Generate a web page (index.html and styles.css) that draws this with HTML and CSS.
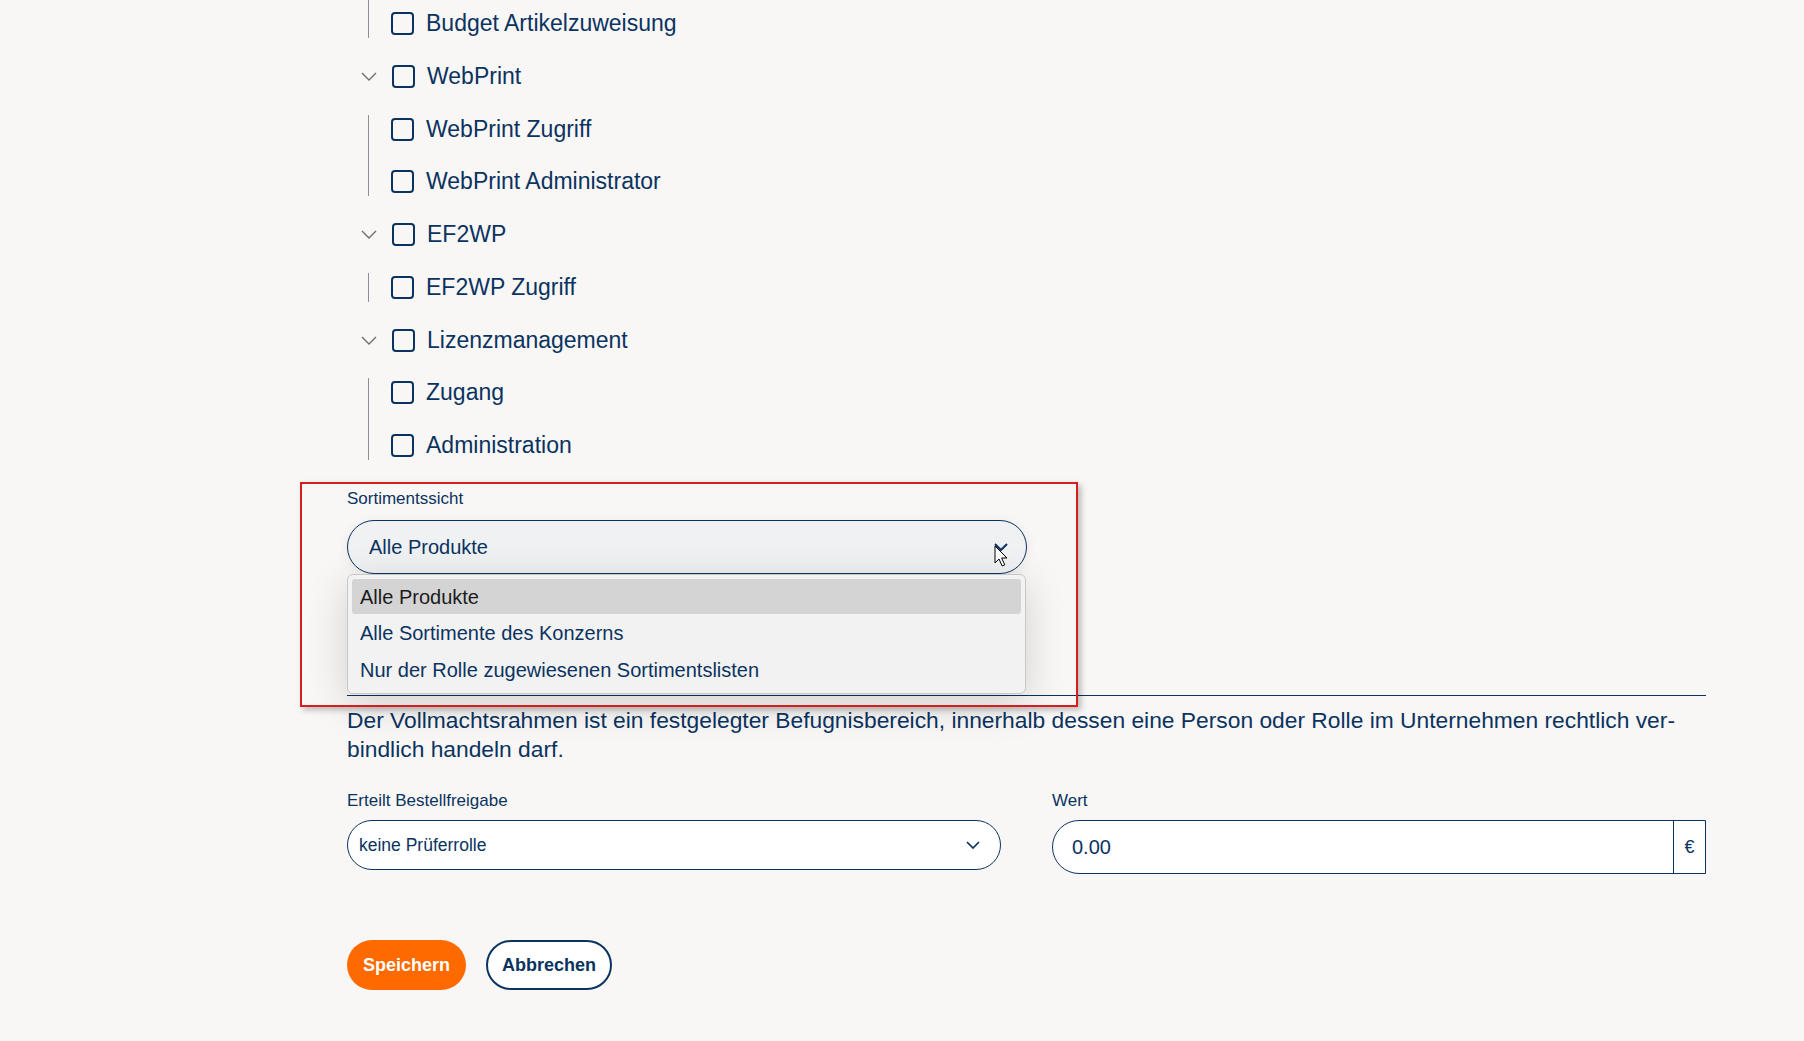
FILE: index.html
```html
<!DOCTYPE html>
<html lang="de">
<head>
    <meta charset="UTF-8">
    <meta name="viewport" content="width=device-width, initial-scale=1.0">
    <title>Rolle bearbeiten</title>
    <link rel="stylesheet" href="styles.css">
</head>
<body>
    <div class="page">

        <!-- permission tree, scrolled: the parent of the first group is above -->
        <div class="tree">
            <div class="children is-continued">
                <div class="node"><span class="box"></span>Budget Artikelzuweisung</div>
            </div>

            <div class="node parent">
                <svg class="toggle" viewBox="0 0 16 9"><path d="M1 1l7 7 7-7"/></svg>
                <span class="box"></span>WebPrint
            </div>
            <div class="children">
                <div class="node"><span class="box"></span>WebPrint Zugriff</div>
                <div class="node"><span class="box"></span>WebPrint Administrator</div>
            </div>

            <div class="node parent">
                <svg class="toggle" viewBox="0 0 16 9"><path d="M1 1l7 7 7-7"/></svg>
                <span class="box"></span>EF2WP
            </div>
            <div class="children">
                <div class="node"><span class="box"></span>EF2WP Zugriff</div>
            </div>

            <div class="node parent">
                <svg class="toggle" viewBox="0 0 16 9"><path d="M1 1l7 7 7-7"/></svg>
                <span class="box"></span>Lizenzmanagement
            </div>
            <div class="children">
                <div class="node"><span class="box"></span>Zugang</div>
                <div class="node"><span class="box"></span>Administration</div>
            </div>
        </div>

        <!-- Sortimentssicht, shown opened -->
        <div class="assortment">
            <div class="field">
                <span class="field-label">Sortimentssicht</span>
                <div class="select is-open">
                    <span class="select-value">Alle Produkte</span>
                    <svg class="select-arrow" viewBox="0 0 14 8"><path d="M1 1l6 6 6-6"/></svg>
                    <svg class="cursor" viewBox="0 0 14 22"><path d="M1 1v17l4-4 3.2 7 2.6-1.2-3.2-6.8H13z"/></svg>
                    <ul class="options">
                        <li class="option is-active">Alle Produkte</li>
                        <li class="option">Alle Sortimente des Konzerns</li>
                        <li class="option">Nur der Rolle zugewiesenen Sortimentslisten</li>
                    </ul>
                </div>
            </div>
            <div class="highlight"></div>
        </div>

        <hr class="divider">

        <p class="note">Der Vollmachtsrahmen ist ein festgelegter Befugnisbereich, innerhalb dessen eine Person oder Rolle im Unternehmen rechtlich ver-<br>bindlich handeln darf.</p>

        <div class="approval">
            <div class="field">
                <span class="field-label">Erteilt Bestellfreigabe</span>
                <div class="select small">
                    <span class="select-value">keine Prüferrolle</span>
                    <svg class="select-arrow" viewBox="0 0 14 8"><path d="M1 1l6 6 6-6"/></svg>
                </div>
            </div>
            <div class="field">
                <span class="field-label">Wert</span>
                <div class="amount">
                    <span class="amount-value">0.00</span>
                    <span class="amount-unit">€</span>
                </div>
            </div>
        </div>

        <div class="actions">
            <button class="btn btn-primary">Speichern</button>
            <button class="btn btn-secondary">Abbrechen</button>
        </div>
    </div>
</body>
</html>
```

FILE: styles.css
```css
body {
    margin: 0;
    background-color: #f8f7f6;
    font-family: "Liberation Sans", Arial, sans-serif;
    color: #0b3360;
}
.page {
    margin-left: 347px;
    width: 1359px;
    padding-bottom: 50px;
}

/* tree */
.tree {
    display: flex;
    flex-direction: column;
    gap: 23.75px;
    padding-left: 14px;
}
.node {
    display: flex;
    align-items: center;
    height: 29px;
    font-size: 23px;
}
.box {
    width: 19px;
    height: 19px;
    border: 2px solid #0b3360;
    border-radius: 4px;
    margin-right: 12px;
    flex-shrink: 0;
}
.toggle {
    width: 16px;
    height: 9px;
    margin-right: 15px;
    fill: none;
    stroke: #6b6e72;
    stroke-width: 1.4;
}
.children {
    display: flex;
    flex-direction: column;
    gap: 23.75px;
    margin-left: 7px;
    padding-left: 22px;
    border-left: 1px solid #8c9096;
}
.children.is-continued {
    padding-top: 9px;
}

/* fields */
.field {
    display: flex;
    flex-direction: column;
    gap: 11px;
}
.field-label {
    font-size: 17px;
    line-height: 20px;
}
.select {
    position: relative;
    display: flex;
    align-items: center;
    justify-content: space-between;
    height: 54px;
    box-sizing: border-box;
    padding: 0 18px 0 21px;
    border: 1px solid #0b3360;
    border-radius: 27px;
    background-color: #fff;
    font-size: 20px;
}
.select.is-open {
    background-color: #f0f1f3;
    box-shadow: 0 2px 12px rgba(0, 0, 0, 0.07);
}
.select.small {
    height: 50px;
    padding: 0 20px 0 11px;
    border-radius: 25px;
    font-size: 17.5px;
}
.select-arrow {
    width: 14px;
    height: 8px;
    fill: none;
    stroke: #0b3360;
    stroke-width: 2;
}
.select.small .select-arrow {
    stroke-width: 1.7;
}
.cursor {
    position: absolute;
    left: 646px;
    top: 24px;
    width: 14px;
    height: 22px;
    fill: #fff;
    stroke: #000;
    stroke-width: 1;
}
.options {
    position: absolute;
    top: calc(100% + 1px);
    left: -1px;
    right: 0;
    margin: 0;
    padding: 4px;
    list-style: none;
    background-color: #f2f2f2;
    border: 1px solid #c8c8c8;
    border-radius: 6px;
    box-shadow: 0 10px 40px rgba(0, 0, 0, 0.16);
    z-index: 2;
}
.option {
    height: 37px;
    line-height: 36px;
    padding-left: 8px;
    border-radius: 3px;
    font-size: 20px;
}
.option.is-active {
    height: 35px;
    margin-bottom: 1px;
    background-color: #d4d4d4;
    color: #1c1c1c;
}

.assortment {
    position: relative;
    width: 680px;
    margin-top: 29px;
    margin-bottom: 121px;
}
/* red annotation frame around the opened select */
.highlight {
    position: absolute;
    top: -7px;
    left: -47px;
    width: 774px;
    height: 221px;
    border: 2px solid #d71d1d;
    box-shadow: 3px 3px 6px rgba(0, 0, 0, 0.25);
    z-index: 3;
}

.divider {
    margin: 0;
    border: none;
    border-top: 1px solid #0b3360;
}
.note {
    margin: 10px 0 0;
    font-size: 22.8px;
    line-height: 29px;
}

/* approval row */
.approval {
    display: grid;
    grid-template-columns: 1fr 1fr;
    gap: 51px;
    margin-top: 27px;
}
.approval .field {
    gap: 9px;
}
.amount {
    display: flex;
    height: 52px;
    border: 1px solid #0b3360;
    border-radius: 27px 0 0 27px;
    background-color: #fff;
}
.amount-value {
    flex: 1;
    display: flex;
    align-items: center;
    padding-left: 19px;
    font-size: 20px;
}
.amount-unit {
    width: 31px;
    display: flex;
    align-items: center;
    justify-content: center;
    border-left: 1px solid #0b3360;
    font-size: 18px;
}

/* buttons */
.actions {
    display: flex;
    gap: 20px;
    margin-top: 66px;
}
.btn {
    height: 50px;
    padding: 0 16px;
    border-radius: 25px;
    font-family: "Liberation Sans", Arial, sans-serif;
    font-size: 18px;
    font-weight: bold;
    cursor: pointer;
}
.btn-primary {
    background-color: #ff6a00;
    border: none;
    color: #fff;
}
.btn-secondary {
    padding: 0 14px;
    background-color: #fff;
    border: 2px solid #0b3360;
    color: #0b3360;
}
```
